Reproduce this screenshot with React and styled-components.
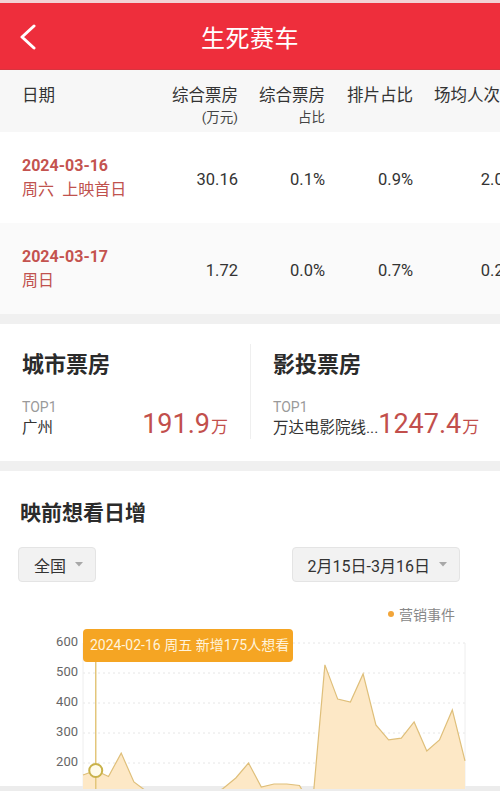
import styled, { createGlobalStyle } from "styled-components";

const GlobalStyle = createGlobalStyle`
  body {
    margin: 0;
    background: #f2f2f2;
    font-family: Roboto, "Noto Sans CJK SC", "Noto Sans", sans-serif;
    color: #333;
  }
`;

const rows = [
  {
    id: "d1",
    date: "2024-03-16",
    sub: "周六\u2002上映首日",
    values: ["30.16", "0.1%", "0.9%", "2.04"],
    shade: false,
  },
  {
    id: "d2",
    date: "2024-03-17",
    sub: "周日",
    values: ["1.72", "0.0%", "0.7%", "0.25"],
    shade: true,
  },
];

const columns = [
  { id: "c1", title: "综合票房", sub: "(万元)" },
  { id: "c2", title: "综合票房", sub: "占比" },
  { id: "c3", title: "排片占比" },
  { id: "c4", title: "场均人次", last: true },
];

const boxOffice = [
  { id: "city", title: "城市票房", name: "广州", value: "191.9" },
  { id: "inv", title: "影投票房", name: "万达电影院线...", value: "1247.4" },
];

const wantData = [
  160, 175, 155, 233, 137, 105, 80, 60, 50, 60, 90, 115, 150, 200, 120, 130,
  130, 125, 50, 527, 413, 403, 497, 327, 277, 283, 337, 240, 277, 377, 207,
];

const X0 = 83;
const X1 = 465;
const toX = (i) => X0 + ((X1 - X0) / (wantData.length - 1)) * i;
const toY = (v) => 17 + (600 - v) * 0.3;

const WantChart = () => {
  const pts = wantData.map((v, i) => `${toX(i).toFixed(1)},${toY(v).toFixed(1)}`);
  const line = pts.join(" ");
  const area = `${X0},${toY(0)} ${line} ${X1},${toY(0)}`;
  return (
    <ChartSvg viewBox="0 0 500 163" width="500" height="163">
      {[600, 500, 400, 300, 200].map((v) => (
        <g key={v}>
          <line
            x1={X0}
            x2={X1}
            y1={toY(v)}
            y2={toY(v)}
            stroke="#e6e6e6"
            strokeDasharray="2 3"
          />
          <text
            x="78"
            y={toY(v)}
            textAnchor="end"
            dominantBaseline="middle"
            fontSize="13"
            fill="#666"
          >
            {v}
          </text>
        </g>
      ))}
      <line x1={X0} x2={X0} y1="17" y2="163" stroke="#eeeeee" />
      <line x1={X1} x2={X1} y1="17" y2="163" stroke="#eeeeee" />
      <polygon points={area} fill="#fde8c6" />
      <polyline points={line} fill="none" stroke="#dfbf7a" strokeWidth="1.2" />
      <line
        x1={toX(1)}
        x2={toX(1)}
        y1="36"
        y2="163"
        stroke="#e3c67a"
        strokeWidth="1.5"
      />
      <circle
        cx={toX(1)}
        cy={toY(175)}
        r="6.5"
        fill="#fffbea"
        stroke="#c9b24a"
        strokeWidth="2"
      />
      <rect x="83" y="3" width="210" height="33" rx="4" fill="#f5a523" />
      <text
        x="90"
        y="20"
        dominantBaseline="middle"
        fontSize="14"
        fill="#fff4dc"
      >
        2024-02-16 周五 新增175人想看
      </text>
    </ChartSvg>
  );
};

const Caret = () => (
  <svg width="8" height="5" viewBox="0 0 8 5">
    <path d="M0 0 L8 0 L4 4.5 Z" fill="#a8a8a8" />
  </svg>
);

const App = () => {
  return (
    <Page>
      <GlobalStyle />
      <TopStrip />
      <Header>
        <BackButton>
          <svg width="20" height="26" viewBox="0 0 20 26">
            <path
              d="M16 2 L4 13 L16 24"
              fill="none"
              stroke="#fff"
              strokeWidth="3"
              strokeLinecap="round"
              strokeLinejoin="round"
            />
          </svg>
        </BackButton>
        <Title>生死赛车</Title>
        <span />
      </Header>

      <TableWrap>
        <TableHead>
          <HeadCell $first>日期</HeadCell>
          {columns.map((c) => (
            <HeadCell key={c.id} $last={c.last}>
              {c.title}
              {c.sub && <HeadSub>{c.sub}</HeadSub>}
            </HeadCell>
          ))}
        </TableHead>
        {rows.map((r) => (
          <TableRow key={r.id} $shade={r.shade}>
            <DateCell>
              <DateText>{r.date}</DateText>
              <DateSub>{r.sub}</DateSub>
            </DateCell>
            {r.values.map((v, i) => (
              <ValueCell key={i}>{v}</ValueCell>
            ))}
          </TableRow>
        ))}
      </TableWrap>

      <Gap />

      <CardSection>
        {boxOffice.map((b, i) => (
          <Card key={b.id} $divider={i > 0}>
            <SectionTitle>{b.title}</SectionTitle>
            <CardBody>
              <CardLeft>
                <TopLabel>TOP1</TopLabel>
                <TopName>{b.name}</TopName>
              </CardLeft>
              <BigValue>
                {b.value}
                <Unit>万</Unit>
              </BigValue>
            </CardBody>
          </Card>
        ))}
      </CardSection>

      <Gap />

      <ChartSection>
        <ChartTitle>映前想看日增</ChartTitle>
        <FilterRow>
          <Dropdown>
            全国
            <Caret />
          </Dropdown>
          <Dropdown>
            2月15日-3月16日
            <Caret />
          </Dropdown>
        </FilterRow>
        <Legend>
          <LegendDot />
          营销事件
        </Legend>
        <WantChart />
      </ChartSection>
      <BottomLine />
    </Page>
  );
};

export default App;

const Page = styled.div`
  width: 500px;
  height: 791px;
  overflow: hidden;
  background: #f2f2f2;
`;

const TopStrip = styled.div`
  height: 3px;
  background: #f2d2d5;
`;

const Header = styled.header`
  height: 66px;
  background: #ee2e3c;
  border-bottom: 1px solid #d8343f;
  display: grid;
  grid-template-columns: 60px 1fr 60px;
  align-items: center;
`;

const BackButton = styled.div`
  display: flex;
  align-items: center;
  padding-left: 18px;
  padding-top: 2px;
`;

const Title = styled.h1`
  margin: 0;
  text-align: center;
  color: #fff;
  font-size: 24px;
  font-weight: 400;
  letter-spacing: 0.5px;
`;

const TableWrap = styled.div`
  width: 500px;
  overflow: hidden;
`;

const TableHead = styled.div`
  display: grid;
  grid-template-columns: 150px 88px 87px 88px 100px;
  width: 513px;
  height: 62px;
  background: #f7f7f7;
  box-sizing: border-box;
  padding-top: 15px;
`;

const HeadCell = styled.div`
  font-size: 16.5px;
  line-height: 22px;
  color: #333;
  text-align: ${({ $first }) => ($first ? "left" : "right")};
  padding-left: ${({ $first }) => ($first ? "22px" : "0")};
  padding-right: ${({ $last }) => ($last ? "13px" : "0")};
  display: flex;
  flex-direction: column;
  white-space: nowrap;
`;

const HeadSub = styled.span`
  font-size: 13.5px;
  line-height: 20px;
  color: #444;
`;

const TableRow = styled.div`
  display: grid;
  grid-template-columns: 150px 88px 87px 88px 100px;
  width: 513px;
  height: 91px;
  box-sizing: border-box;
  padding-top: 3px;
  align-items: center;
  background: ${({ $shade }) => ($shade ? "#fafafa" : "#ffffff")};
`;

const DateCell = styled.div`
  padding-left: 22px;
  display: flex;
  flex-direction: column;
  margin-top: -3px;
`;

const DateText = styled.span`
  font-size: 16px;
  font-weight: 700;
  line-height: 24px;
  color: #c4534f;
`;

const DateSub = styled.span`
  font-size: 16px;
  line-height: 24px;
  color: #c0524e;
  white-space: pre;
`;

const ValueCell = styled.div`
  font-size: 16.5px;
  color: #333;
  text-align: right;
  white-space: nowrap;
`;

const Gap = styled.div`
  height: 10px;
  background: #f0f0f0;
`;

const CardSection = styled.section`
  display: flex;
  background: #fff;
  height: 137px;
`;

const Card = styled.div`
  flex: 0 0 250px;
  box-sizing: border-box;
  padding: 26px 22px 0 22px;
  position: relative;
  border-left: ${({ $divider }) => ($divider ? "1px solid #efefef" : "none")};
  margin: ${({ $divider }) => ($divider ? "20px 0 22px" : "0")};
  padding-top: ${({ $divider }) => ($divider ? "6px" : "26px")};
`;

const SectionTitle = styled.h2`
  margin: 0;
  font-size: 22px;
  line-height: 30px;
  font-weight: 700;
  color: #2b2b2b;
`;

const CardBody = styled.div`
  display: flex;
  align-items: flex-end;
  justify-content: space-between;
  margin-top: 18px;
`;

const CardLeft = styled.div`
  display: flex;
  flex-direction: column;
`;

const TopLabel = styled.span`
  font-size: 14px;
  line-height: 18px;
  color: #9a9a9a;
`;

const TopName = styled.span`
  font-size: 15.5px;
  line-height: 24px;
  color: #333;
  white-space: nowrap;
`;

const BigValue = styled.span`
  font-size: 27px;
  line-height: 32px;
  color: #c24f4c;
  white-space: nowrap;
  margin-bottom: -3px;
`;

const Unit = styled.span`
  font-size: 17px;
  margin-left: 1px;
`;

const ChartSection = styled.section`
  background: #fff;
  height: 315px;
  box-sizing: border-box;
  padding-top: 27px;
`;

const ChartTitle = styled.h2`
  margin: 0 0 0 20px;
  font-size: 21px;
  line-height: 30px;
  font-weight: 700;
  color: #2b2b2b;
`;

const FilterRow = styled.div`
  display: flex;
  justify-content: space-between;
  padding: 0 40px 0 18px;
  margin-top: 19px;
`;

const Dropdown = styled.div`
  height: 35px;
  box-sizing: border-box;
  padding: 0 12px 0 15px;
  display: flex;
  align-items: center;
  gap: 9px;
  background: #f2f2f2;
  border: 1px solid #e4e4e4;
  border-radius: 4px;
  font-size: 16px;
  color: #333;
`;

const Legend = styled.div`
  display: flex;
  justify-content: flex-end;
  align-items: center;
  gap: 5px;
  padding-right: 45px;
  margin-top: 23px;
  margin-bottom: 3px;
  height: 18px;
  font-size: 14px;
  color: #888;
`;

const LegendDot = styled.span`
  width: 6px;
  height: 6px;
  border-radius: 50%;
  background: #f2a53a;
`;

const ChartSvg = styled.svg`
  display: block;
`;

const BottomLine = styled.div`
  height: 6px;
  background: #ececec;
`;
